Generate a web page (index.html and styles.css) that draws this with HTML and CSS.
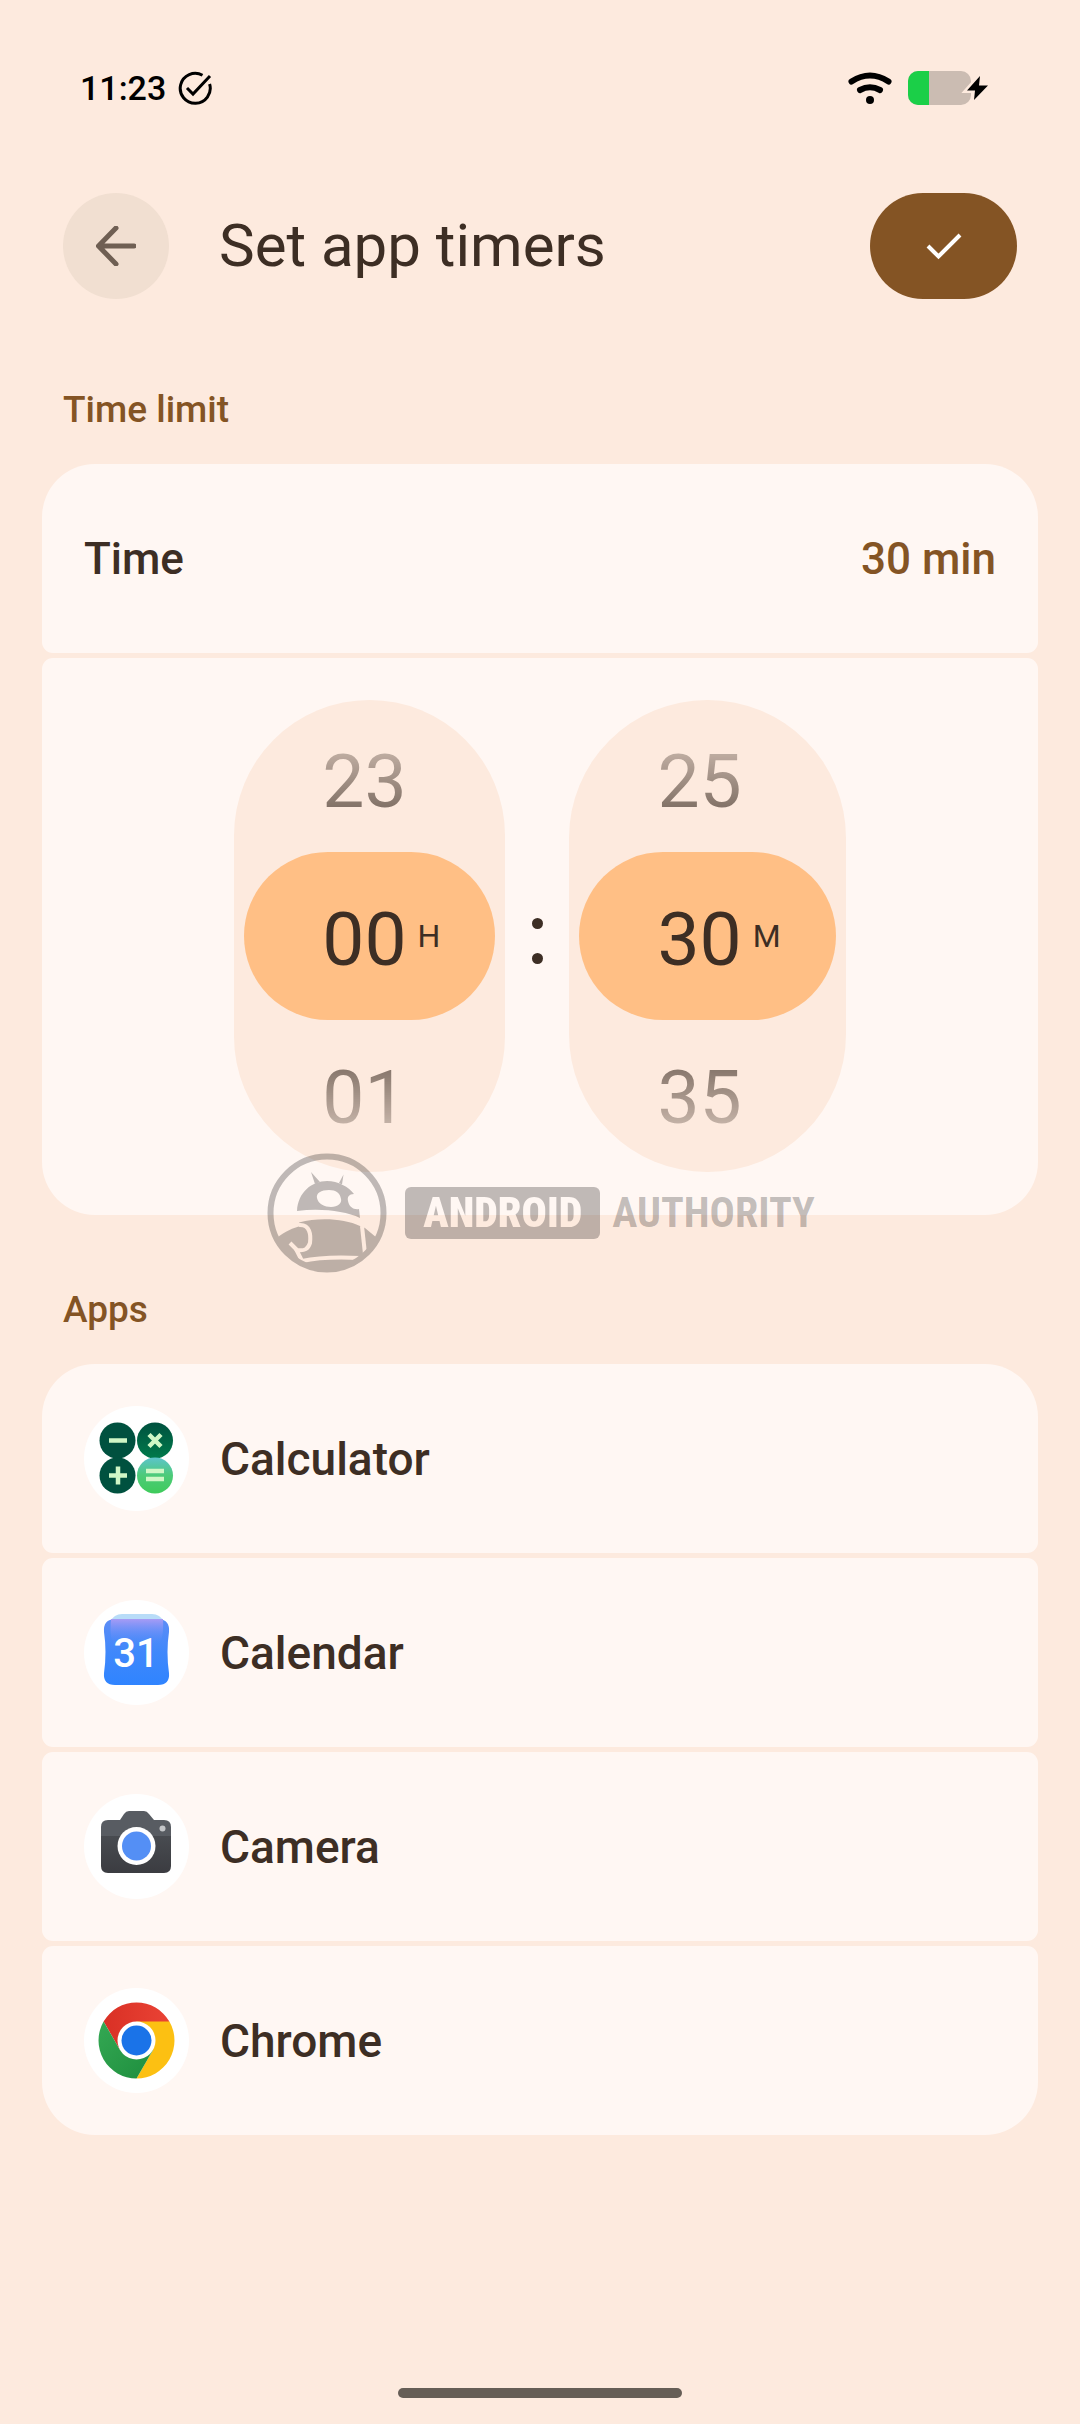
FILE: index.html
```html
<!DOCTYPE html>
<html lang="en">
<head>
  <meta charset="UTF-8" />
  <meta name="viewport" content="width=device-width, initial-scale=1.0"/>
  <title>Set app timers</title>
  <link rel="stylesheet" href="styles.css">
</head>
<body>
  <div class="screen">
    <div class="status-bar">
      <span class="clock">11:23</span>
      <svg class="status-check" viewBox="0 0 34 34" aria-hidden="true">
        <path d="M24.5 4.2A15 15 0 1 0 31.6 13"/>
        <path d="M9 17l6 6L32 5"/>
      </svg>
      <svg class="wifi" viewBox="0 0 44 34" aria-hidden="true">
        <path d="M3.500 10.500Q22 -1.500 40.500 10.500"/>
        <path d="M12 19Q22 13.500 32 19"/>
        <circle cx="22" cy="29" r="4"/>
      </svg>
      <svg class="battery" viewBox="0 0 80 34" aria-hidden="true">
        <rect width="63" height="34" rx="10" fill="#cbbcb2"/>
        <path d="M21 0H10A10 10 0 0 0 0 10V24A10 10 0 0 0 10 34H21Z" fill="#1bcf48"/>
        <path d="M72 5L59 19.500H67L66 29L80 14.500H71Z" fill="#000" stroke="#fdeade" stroke-width="5" paint-order="stroke"/>
      </svg>
    </div>

    <header class="top-bar">
      <button class="back" aria-label="Back">
        <svg viewBox="0 0 40 40"><path d="M38 20H3M20 2L2.500 20L20 38"/></svg>
      </button>
      <h1>Set app timers</h1>
      <button class="done" aria-label="Done">
        <svg viewBox="0 0 36 27"><path d="M2 13L12.500 23.500L34 2"/></svg>
      </button>
    </header>

    <main>
      <section>
        <h2>Time limit</h2>
        <div class="cards">
          <div class="card time-row">
            <span>Time</span>
            <span class="time-value">30 min</span>
          </div>
          <div class="card picker">
            <div class="wheel" role="spinbutton" aria-label="Hours" aria-valuenow="0" aria-valuemin="0" aria-valuemax="23">
              <div class="pill"></div>
              <div class="numbers">
                <div>23</div>
                <div>00</div>
                <div>01</div>
              </div>
              <span class="unit">H</span>
            </div>
            <div class="colon"><i></i><i></i></div>
            <div class="wheel" role="spinbutton" aria-label="Minutes" aria-valuenow="30" aria-valuemin="0" aria-valuemax="55">
              <div class="pill"></div>
              <div class="numbers">
                <div>25</div>
                <div>30</div>
                <div>35</div>
              </div>
              <span class="unit">M</span>
            </div>
            <div class="watermark">
              <svg viewBox="0 0 124 124" aria-hidden="true">
                <mask id="gaps">
                  <rect width="124" height="124" fill="#fff"/>
                  <g fill="none" stroke="#000" stroke-width="4">
                    <path d="M34 74C45 73 46 84 45 92C43 98 40 100 32 99L25 92"/>
                    <path d="M31 98L37 110C55 106 75 106 95 107"/>
                    <path d="M97 75L100 103"/>
                  </g>
                </mask>
                <circle cx="62" cy="62" r="56.500" fill="none" stroke="#161414" stroke-width="6"/>
                <path fill="#161414" fill-rule="evenodd" d="M32 60C33 41 47 30 62 30C73 30 84 36 89 43C84 43 82 46 83 50C84 56 89 59 94 58L95 67C80 60 56 57 32 60ZM64 39C56 39 51 42 52 47C53 53 60 56 66 56C73 56 77 52 76 48C75 42 71 39 64 39Z"/>
                <path fill="#161414" d="M46 21L50 33L55 31ZM78.500 23.500L74 32L77 33.500Z"/>
                <path fill="#161414" mask="url(#gaps)" d="M12 87C20 80 28 77 36 75L34 71.500C55 66 80 68 95 75L100 77L112 87C103 106 86 118 62 118C38 118 21 107 12 87Z"/>
              </svg>
              <span class="mark-box"><b>ANDROID</b></span>
              <span class="mark-text">AUTHORITY</span>
            </div>
          </div>
        </div>
      </section>

      <section>
        <h2>Apps</h2>
        <ul class="cards">
          <li class="card app">
            <svg viewBox="0 0 105 105" aria-hidden="true">
              <defs>
                <linearGradient id="calcDark" x1="0" y1="0" x2="0" y2="1"><stop offset="0" stop-color="#00513f"/><stop offset="1" stop-color="#007a4b"/></linearGradient>
                <linearGradient id="calcLight" x1="0" y1="0" x2="0" y2="1"><stop offset="0" stop-color="#5cc4cc"/><stop offset=".5" stop-color="#4ccb78"/><stop offset="1" stop-color="#3fcb5b"/></linearGradient>
              </defs>
              <circle cx="52.500" cy="52.500" r="52.500" fill="#fff"/>
              <circle cx="33.500" cy="34.500" r="18" fill="#00513f"/>
              <circle cx="71" cy="34.500" r="18" fill="url(#calcDark)"/>
              <circle cx="33.500" cy="69.500" r="18" fill="#00513f"/>
              <circle cx="71" cy="69.500" r="18" fill="url(#calcLight)"/>
              <path d="M25 34.500H43M65 28.500L77 40.500M77 28.500L65 40.500M25 69.500H43M34 60.500V78.500M62 65H80M62 73H80" stroke="#cff7c6" stroke-width="4.500"/>
            </svg>
            <span>Calculator</span>
          </li>
          <li class="card app">
            <svg viewBox="0 0 105 105" aria-hidden="true">
              <defs>
                <linearGradient id="calBody" x1="0" y1="0" x2="0" y2="1"><stop offset="0" stop-color="#5d8df6"/><stop offset=".5" stop-color="#4088fb"/><stop offset="1" stop-color="#2f84ff"/></linearGradient>
                <linearGradient id="calGlow" x1="0" y1="0" x2="0" y2="1"><stop offset="0" stop-color="#a79bf5"/><stop offset="1" stop-color="#4b8bfa" stop-opacity="0"/></linearGradient>
              </defs>
              <circle cx="52.500" cy="52.500" r="52.500" fill="#fff"/>
              <path d="M26 22Q30 14 38 14H68Q76 14 80 22Z" fill="#b8dcf8"/>
              <path d="M30 19H75Q86 20 85 32Q82 52 85 73Q86 85 74 85H31Q19 85 20 73Q23 52 20 32Q19 20 30 19Z" fill="url(#calBody)"/>
              <path d="M27 19H79Q80 40 74 45H31Q25 40 27 19Z" fill="url(#calGlow)"/>
              <text x="52" y="67" text-anchor="middle" class="cal-day">31</text>
            </svg>
            <span>Calendar</span>
          </li>
          <li class="card app">
            <svg viewBox="0 0 105 105" aria-hidden="true">
              <defs>
                <linearGradient id="camBody" x1="0" y1="0" x2="0" y2="1"><stop offset="0" stop-color="#484b50"/><stop offset="1" stop-color="#3b3c41"/></linearGradient>
              </defs>
              <circle cx="52.500" cy="52.500" r="52.500" fill="#fff"/>
              <path d="M17 42H87V72Q87 79 80 79H24Q17 79 17 72Z" fill="url(#camBody)"/>
              <path d="M17 42V33Q17 26 24 26H36L40 20Q42 17 45 17H60Q63 17 65 20L70 26H80Q87 26 87 33V42Z" fill="#585c62"/>
              <circle cx="52.500" cy="52" r="19" fill="#fff"/>
              <circle cx="52.500" cy="52" r="14.500" fill="#548ff5"/>
              <circle cx="78.500" cy="34.500" r="3" fill="#c3c5c8"/>
            </svg>
            <span>Camera</span>
          </li>
          <li class="card app">
            <svg viewBox="0 0 105 105" aria-hidden="true">
              <defs>
                <linearGradient id="chRed" x1="0" y1="0" x2="1" y2="0"><stop offset="0" stop-color="#d93025"/><stop offset="1" stop-color="#ea4335"/></linearGradient>
                <linearGradient id="chGreen" x1="0" y1="0" x2="1" y2="1"><stop offset="0" stop-color="#34a853"/><stop offset="1" stop-color="#1e8e3e"/></linearGradient>
              </defs>
              <circle cx="52.500" cy="52.500" r="52.500" fill="#fff"/>
              <path d="M85.400 33.500A38 38 0 0 0 19.600 33.500L36 62L52.500 52Z" fill="url(#chRed)"/>
              <path d="M85.400 33.500H52.500V52L69 62L52.500 90.500A38 38 0 0 0 85.400 33.500Z" fill="#fcc012"/>
              <path d="M52.500 90.500L69 62L52.500 52L36 62L19.600 33.500A38 38 0 0 0 52.500 90.500Z" fill="url(#chGreen)"/>
              <circle cx="52.500" cy="52.500" r="19" fill="#fff"/>
              <circle cx="52.500" cy="52.500" r="15" fill="#1a73e8"/>
            </svg>
            <span>Chrome</span>
          </li>
        </ul>
      </section>
    </main>

    <div class="nav-handle"></div>
  </div>
</body>
</html>
```
FILE: styles.css
```css
* {
  box-sizing: border-box;
}

body {
  margin: 0;
  background-color: #fdeade;
  color: #3d2e24;
  font-family: Roboto, Arial, sans-serif;
  font-weight: 500;
}

.screen {
  display: flex;
  flex-direction: column;
  min-height: 100vh;
  padding: 64px 42px 26px;
}

/* status bar */
.status-bar {
  display: flex;
  align-items: center;
  height: 48px;
  padding: 0 50px 0 38px;
  color: #000;
}

.clock {
  font-size: 34px;
  line-height: 48px;
}

.status-check {
  width: 34px;
  height: 34px;
  margin-left: 12px;
  fill: none;
  stroke: #000;
  stroke-width: 3;
}

.wifi {
  width: 44px;
  height: 34px;
  margin-left: auto;
}

.wifi path {
  fill: none;
  stroke: #000;
  stroke-width: 6;
  stroke-linecap: round;
}

.battery {
  width: 80px;
  height: 34px;
  margin-left: 16px;
  overflow: visible;
}

/* top bar */
.top-bar {
  display: flex;
  align-items: center;
  margin-top: 81px;
  padding: 0 21px;
}

h1 {
  flex: 1;
  margin: 0 0 0 50px;
  font-size: 60px;
  font-weight: 400;
  line-height: 72px;
}

button {
  display: flex;
  align-items: center;
  justify-content: center;
  height: 106px;
  padding: 0;
  border: none;
  border-radius: 53px;
  cursor: pointer;
}

button path {
  fill: none;
  stroke-width: 5;
}

.back {
  width: 106px;
  background-color: #f1dfd1;
}

.back svg {
  width: 40px;
  height: 40px;
}

.back path {
  stroke: #6f5f53;
  stroke-linecap: round;
  stroke-linejoin: round;
}

.done {
  width: 147px;
  background-color: #845424;
}

.done svg {
  width: 36px;
  height: 27px;
}

.done path {
  stroke: #fff;
  stroke-width: 4;
}

/* sections */
h2 {
  margin: 0;
  padding: 0 21px;
  color: #845424;
  font-size: 37px;
  font-weight: 500;
  line-height: 44px;
}

main {
  padding-top: 16px;
}

section {
  padding-top: 73px;
}

.cards {
  display: flex;
  flex-direction: column;
  gap: 5px;
  margin: 32px 0 0;
  padding: 0;
  list-style: none;
}

.card {
  background-color: #fff7f3;
  border-radius: 11px;
  font-size: 44px;
}

.card:first-child {
  border-top-left-radius: 53px;
  border-top-right-radius: 53px;
}

.card:last-child {
  border-bottom-left-radius: 53px;
  border-bottom-right-radius: 53px;
}

.time-row {
  display: flex;
  align-items: center;
  justify-content: space-between;
  height: 189px;
  padding: 0 42px;
}

.time-value {
  color: #845424;
}

/* picker */
.picker {
  position: relative;
  display: flex;
  justify-content: center;
  padding: 42px 0 43px;
}

.wheel {
  display: grid;
  grid-template-columns: 88px auto auto 65px;
  grid-template-rows: 472px;
  align-items: center;
  border-radius: 138px;
  background-color: #fdeade;
}

.pill {
  grid-area: 1 / 1 / 2 / 5;
  height: 168px;
  margin: 0 10px;
  border-radius: 84px;
  background-color: #ffbf85;
}

.numbers {
  grid-area: 1 / 2;
  padding-top: 6px;
  font-size: 75px;
  font-weight: 400;
  line-height: 158px;
  -webkit-mask-image: linear-gradient(transparent, #000 175px, #000 305px, transparent);
  mask-image: linear-gradient(transparent, #000 175px, #000 305px, transparent);
}

.unit {
  grid-area: 1 / 3;
  margin-left: 11px;
  font-size: 32px;
  font-weight: 400;
  line-height: 38px;
}

.colon {
  display: flex;
  flex-direction: column;
  align-items: center;
  justify-content: center;
  gap: 24px;
  width: 64px;
  padding-top: 10px;
}

.colon i {
  width: 11px;
  height: 11px;
  border-radius: 50%;
  background-color: #3d2e24;
}

/* watermark lies over the bottom edge of the picker card */
.watermark {
  position: absolute;
  bottom: -60px;
  left: 0;
  right: 0;
  display: flex;
  align-items: center;
  justify-content: center;
  font-family: "Roboto Condensed", "Liberation Sans Narrow", Roboto, sans-serif;
  font-size: 42px;
  font-weight: 700;
  line-height: 52px;
  pointer-events: none;
}

.watermark svg {
  width: 124px;
  height: 124px;
  opacity: 0.27;
}

.mark-box {
  margin: 0 12px 0 16px;
  padding: 0 18px;
  border-radius: 6px;
  background-color: rgba(22, 20, 20, 0.27);
}

.mark-box b {
  display: block;
  color: transparent;
  background-image: linear-gradient(#fff7f3 54%, #fdeade 54%);
  -webkit-background-clip: text;
  background-clip: text;
}

.mark-text {
  color: rgba(22, 20, 20, 0.27);
}

/* apps */
.app {
  display: flex;
  align-items: center;
  gap: 31px;
  padding: 42px;
  font-size: 46px;
}

.app svg {
  width: 105px;
  height: 105px;
}

.cal-day {
  fill: #fff;
  font-size: 40px;
}

.nav-handle {
  width: 284px;
  height: 10px;
  margin: auto auto 0;
  border-radius: 5px;
  background-color: #665e56;
}
```
